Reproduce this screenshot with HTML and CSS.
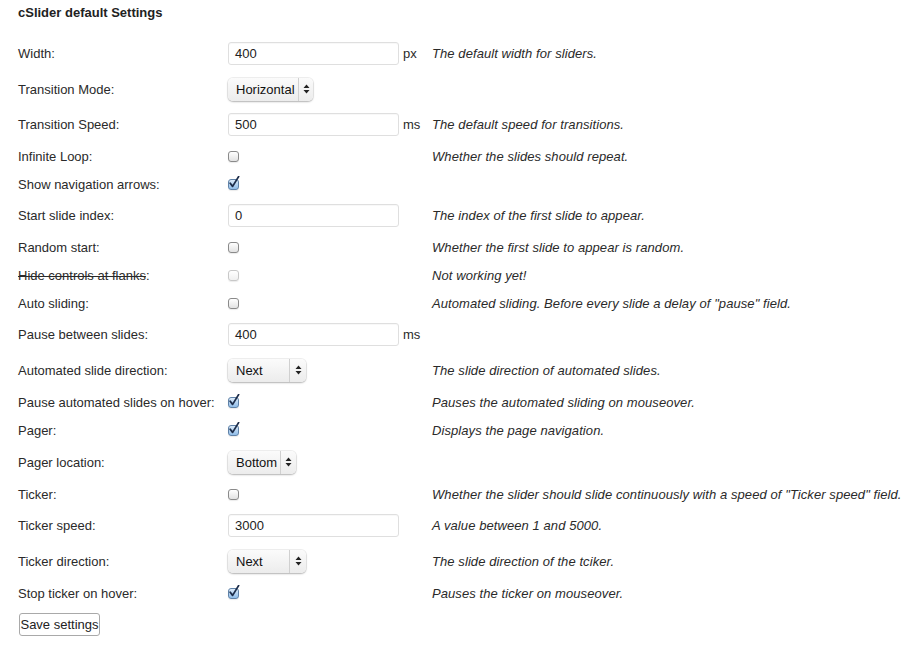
FILE: index.html
```html
<!DOCTYPE html>
<html>
<head>
<meta charset="utf-8">
<link rel="stylesheet" href="styles.css">
</head>
<body>
<div class="page">
  <h3 class="title">cSlider default Settings</h3>
  <div class="form">
    <div class="row row-text">
      <span class="label">Width:</span>
      <span class="ctrl"><span class="input">400</span></span>
      <span class="unit">px</span>
      <span class="desc">The default width for sliders.</span>
    </div>
    <div class="row row-select">
      <span class="label">Transition Mode:</span>
      <span class="ctrl"><span class="select sel-mode"><span class="sel-text">Horizontal</span><span class="sel-arrow"><svg width="7" height="10" viewBox="0 0 7 10"><path d="M3.5 0.5 L6.5 4 L0.5 4 Z M0.5 6 L6.5 6 L3.5 9.5 Z" fill="#222"/></svg></span></span></span>
      <span class="unit"></span>
      <span class="desc"></span>
    </div>
    <div class="row row-text">
      <span class="label">Transition Speed:</span>
      <span class="ctrl"><span class="input">500</span></span>
      <span class="unit">ms</span>
      <span class="desc">The default speed for transitions.</span>
    </div>
    <div class="row row-check">
      <span class="label">Infinite Loop:</span>
      <span class="ctrl"><span class="cb"></span></span>
      <span class="unit"></span>
      <span class="desc">Whether the slides should repeat.</span>
    </div>
    <div class="row row-check">
      <span class="label">Show navigation arrows:</span>
      <span class="ctrl"><span class="cb cb-on"><svg class="tick" width="12" height="13" viewBox="0 0 12 13"><path d="M2.2 7.2 L4.6 10.4 L10.6 0.6" fill="none" stroke="#1d2d4a" stroke-width="1.8" stroke-linecap="round" stroke-linejoin="round"/></svg></span></span>
      <span class="unit"></span>
      <span class="desc"></span>
    </div>
    <div class="row row-text">
      <span class="label">Start slide index:</span>
      <span class="ctrl"><span class="input">0</span></span>
      <span class="unit"></span>
      <span class="desc">The index of the first slide to appear.</span>
    </div>
    <div class="row row-check">
      <span class="label">Random start:</span>
      <span class="ctrl"><span class="cb"></span></span>
      <span class="unit"></span>
      <span class="desc">Whether the first slide to appear is random.</span>
    </div>
    <div class="row row-check">
      <span class="label"><s>Hide controls at flanks</s>:</span>
      <span class="ctrl"><span class="cb cb-off"></span></span>
      <span class="unit"></span>
      <span class="desc">Not working yet!</span>
    </div>
    <div class="row row-check">
      <span class="label">Auto sliding:</span>
      <span class="ctrl"><span class="cb"></span></span>
      <span class="unit"></span>
      <span class="desc">Automated sliding. Before every slide a delay of "pause" field.</span>
    </div>
    <div class="row row-text">
      <span class="label">Pause between slides:</span>
      <span class="ctrl"><span class="input">400</span></span>
      <span class="unit">ms</span>
      <span class="desc"></span>
    </div>
    <div class="row row-select">
      <span class="label">Automated slide direction:</span>
      <span class="ctrl"><span class="select sel-dir"><span class="sel-text">Next</span><span class="sel-arrow"><svg width="7" height="10" viewBox="0 0 7 10"><path d="M3.5 0.5 L6.5 4 L0.5 4 Z M0.5 6 L6.5 6 L3.5 9.5 Z" fill="#222"/></svg></span></span></span>
      <span class="unit"></span>
      <span class="desc">The slide direction of automated slides.</span>
    </div>
    <div class="row row-check">
      <span class="label">Pause automated slides on hover:</span>
      <span class="ctrl"><span class="cb cb-on"><svg class="tick" width="12" height="13" viewBox="0 0 12 13"><path d="M2.2 7.2 L4.6 10.4 L10.6 0.6" fill="none" stroke="#1d2d4a" stroke-width="1.8" stroke-linecap="round" stroke-linejoin="round"/></svg></span></span>
      <span class="unit"></span>
      <span class="desc">Pauses the automated sliding on mouseover.</span>
    </div>
    <div class="row row-check">
      <span class="label">Pager:</span>
      <span class="ctrl"><span class="cb cb-on"><svg class="tick" width="12" height="13" viewBox="0 0 12 13"><path d="M2.2 7.2 L4.6 10.4 L10.6 0.6" fill="none" stroke="#1d2d4a" stroke-width="1.8" stroke-linecap="round" stroke-linejoin="round"/></svg></span></span>
      <span class="unit"></span>
      <span class="desc">Displays the page navigation.</span>
    </div>
    <div class="row row-select">
      <span class="label">Pager location:</span>
      <span class="ctrl"><span class="select sel-pager"><span class="sel-text">Bottom</span><span class="sel-arrow"><svg width="7" height="10" viewBox="0 0 7 10"><path d="M3.5 0.5 L6.5 4 L0.5 4 Z M0.5 6 L6.5 6 L3.5 9.5 Z" fill="#222"/></svg></span></span></span>
      <span class="unit"></span>
      <span class="desc"></span>
    </div>
    <div class="row row-check">
      <span class="label">Ticker:</span>
      <span class="ctrl"><span class="cb"></span></span>
      <span class="unit"></span>
      <span class="desc">Whether the slider should slide continuously with a speed of "Ticker speed" field.</span>
    </div>
    <div class="row row-text">
      <span class="label">Ticker speed:</span>
      <span class="ctrl"><span class="input">3000</span></span>
      <span class="unit"></span>
      <span class="desc">A value between 1 and 5000.</span>
    </div>
    <div class="row row-select">
      <span class="label">Ticker direction:</span>
      <span class="ctrl"><span class="select sel-dir"><span class="sel-text">Next</span><span class="sel-arrow"><svg width="7" height="10" viewBox="0 0 7 10"><path d="M3.5 0.5 L6.5 4 L0.5 4 Z M0.5 6 L6.5 6 L3.5 9.5 Z" fill="#222"/></svg></span></span></span>
      <span class="unit"></span>
      <span class="desc">The slide direction of the tciker.</span>
    </div>
    <div class="row row-check">
      <span class="label">Stop ticker on hover:</span>
      <span class="ctrl"><span class="cb cb-on"><svg class="tick" width="12" height="13" viewBox="0 0 12 13"><path d="M2.2 7.2 L4.6 10.4 L10.6 0.6" fill="none" stroke="#1d2d4a" stroke-width="1.8" stroke-linecap="round" stroke-linejoin="round"/></svg></span></span>
      <span class="unit"></span>
      <span class="desc">Pauses the ticker on mouseover.</span>
    </div>
  </div>
  <button class="btn" type="button">Save settings</button>
</div>
</body>
</html>
```
FILE: styles.css
```css
html, body {
  margin: 0;
  padding: 0;
  background: #fff;
}
body {
  font-family: "Liberation Sans", Arial, sans-serif;
  font-size: 13px;
  color: #2a2a2a;
}
.page {
  padding: 0 0 0 18px;
}
.title {
  margin: 5px 0 0 0;
  font-size: 13px;
  line-height: 16px;
  font-weight: bold;
  color: #222;
}
.form {
  margin-top: 15px;
}
.row {
  display: grid;
  grid-template-columns: 210px 175px 29px 1fr;
  align-items: center;
  white-space: nowrap;
}
.row-text { height: 35px; }
.row-select { height: 36px; }
.row-check { height: 28px; }
.label {
  color: #2a2a2a;
}
.label s {
  text-decoration-thickness: 1px;
}
.ctrl {
  display: flex;
  align-items: center;
}
.unit {
  color: #2a2a2a;
}
.desc {
  font-style: italic;
  color: #2a2a2a;
  letter-spacing: 0.08px;
}
.input {
  box-sizing: border-box;
  width: 171px;
  height: 23px;
  border: 1px solid #dfdfdf;
  border-radius: 3px;
  padding: 0 6px;
  line-height: 21px;
  color: #222;
  background: #fff;
  box-shadow: inset 0 1px 1px rgba(0,0,0,0.03);
}
.select {
  box-sizing: border-box;
  display: inline-flex;
  align-items: stretch;
  height: 23px;
  border-radius: 5px;
  background: linear-gradient(#fbfbfb, #ececec);
  box-shadow: 0 0 0 1px rgba(0,0,0,0.06), 0 1px 2px rgba(0,0,0,0.25);
  color: #111;
}
.sel-text {
  flex: 1;
  padding-left: 8px;
  line-height: 23px;
}
.sel-arrow {
  display: flex;
  align-items: center;
  justify-content: center;
  border-left: 1px solid #d0d0d0;
}
.sel-mode { width: 85px; }
.sel-mode .sel-arrow { width: 14px; }
.sel-dir { width: 78px; }
.sel-dir .sel-arrow { width: 16px; }
.sel-pager { width: 68px; }
.sel-pager .sel-arrow { width: 15px; }
.cb {
  position: relative;
  box-sizing: border-box;
  display: inline-block;
  width: 11px;
  height: 11px;
  border: 1px solid #8a8a8a;
  border-radius: 3px;
  background: linear-gradient(#ffffff, #e2e2e2);
  box-shadow: 0 1px 1px rgba(0,0,0,0.08);
}
.cb-off {
  border-color: #c8c8c8;
  background: linear-gradient(#ffffff, #f0f0f0);
}
.cb-on {
  border-color: #5f82a8;
  background: linear-gradient(#dcebfa, #8fbce8);
}
.tick {
  position: absolute;
  left: -1px;
  top: -4px;
}
.btn {
  margin-top: 6px;
  margin-left: 1px;
  box-sizing: border-box;
  height: 23px;
  width: 81px;
  padding: 0;
  border: 1px solid #a9a9a9;
  border-radius: 3px;
  background: #fff;
  font-family: "Liberation Sans", Arial, sans-serif;
  font-size: 13px;
  color: #222;
}
```
